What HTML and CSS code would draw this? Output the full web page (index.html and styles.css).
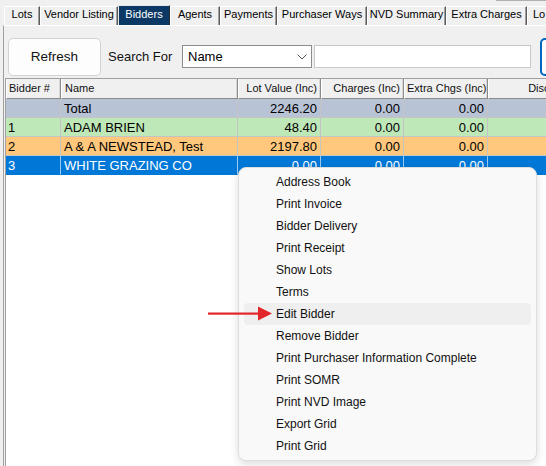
FILE: index.html
```html
<!DOCTYPE html>
<html>
<head>
<meta charset="utf-8">
<link rel="stylesheet" href="styles.css">
</head>
<body>
<div class="topline"></div>
<div class="tabs">
  <div class="tab w-lots">Lots</div>
  <div class="tab w-vendor">Vendor Listing</div>
  <div class="tab active w-bidders">Bidders</div>
  <div class="tab w-agents">Agents</div>
  <div class="tab w-payments">Payments</div>
  <div class="tab w-ways">Purchaser Ways</div>
  <div class="tab w-nvd">NVD Summary</div>
  <div class="tab w-extra">Extra Charges</div>
  <div class="tab w-lo">Lo</div>
</div>
<div class="panel">
  <div class="toolbar">
    <div class="btn-refresh">Refresh</div>
    <div class="search-label">Search For</div>
    <div class="combo"><span>Name</span>
      <svg class="chev" width="10" height="6" viewBox="0 0 10 6"><polyline points="0.5,0.5 5,5 9.5,0.5" fill="none" stroke="#555" stroke-width="1"/></svg>
    </div>
    <div class="textbox"></div>
    <div class="btn-blue"></div>
  </div>
  <div class="grid">
    <div class="row head">
      <div class="c">Bidder #</div>
      <div class="c">Name</div>
      <div class="c r">Lot Value (Inc)</div>
      <div class="c r">Charges (Inc)</div>
      <div class="c r">Extra Chgs (Inc)</div>
      <div class="c r">Discount (Inc)</div>
    </div>
    <div class="row data total">
      <div class="c"></div>
      <div class="c">Total</div>
      <div class="c r">2246.20</div>
      <div class="c r">0.00</div>
      <div class="c r">0.00</div>
      <div class="c r"></div>
    </div>
    <div class="row data green">
      <div class="c">1</div>
      <div class="c">ADAM BRIEN</div>
      <div class="c r">48.40</div>
      <div class="c r">0.00</div>
      <div class="c r">0.00</div>
      <div class="c r"></div>
    </div>
    <div class="row data orange">
      <div class="c">2</div>
      <div class="c">A &amp; A NEWSTEAD, Test</div>
      <div class="c r">2197.80</div>
      <div class="c r">0.00</div>
      <div class="c r">0.00</div>
      <div class="c r"></div>
    </div>
    <div class="row data selected">
      <div class="c">3</div>
      <div class="c">WHITE GRAZING CO</div>
      <div class="c r">0.00</div>
      <div class="c r">0.00</div>
      <div class="c r">0.00</div>
      <div class="c r"></div>
    </div>
  </div>
</div>

<div class="menu">
  <div class="item">Address Book</div>
  <div class="item">Print Invoice</div>
  <div class="item">Bidder Delivery</div>
  <div class="item">Print Receipt</div>
  <div class="item">Show Lots</div>
  <div class="item">Terms</div>
  <div class="item hover">Edit Bidder</div>
  <div class="item">Remove Bidder</div>
  <div class="item">Print Purchaser Information Complete</div>
  <div class="item">Print SOMR</div>
  <div class="item">Print NVD Image</div>
  <div class="item">Export Grid</div>
  <div class="item">Print Grid</div>
</div>

<svg class="arrow" width="70" height="18" viewBox="0 0 70 18">
  <rect x="3" y="7.5" width="52" height="2.2" fill="#e3262b"/>
  <polygon points="53,1.5 67,8.6 53,15.5" fill="#e3262b"/>
</svg>
</body>
</html>
```
FILE: styles.css
```css
html, body {
  margin: 0;
  padding: 0;
}
body {
  width: 546px;
  height: 466px;
  overflow: hidden;
  position: relative;
  background: #f0f0f0;
  font-family: "Liberation Sans", Arial, sans-serif;
  color: #000;
}
.topline {
  position: absolute;
  left: 496px;
  top: 0;
  width: 60px;
  height: 1px;
  background: #b0b0b0;
}
.tabs {
  display: flex;
  align-items: flex-end;
  height: 25px;
  padding-left: 4px;
  box-sizing: border-box;
  white-space: nowrap;
}
.tab {
  flex: none;
  box-sizing: border-box;
  height: 19px;
  border-left: 1px solid #fff;
  border-top: 1px solid #fff;
  border-right: 1px solid #5a5a5a;
  box-shadow: inset -1px 0 #a0a0a0;
  font-size: 11px;
  line-height: 15px;
  text-align: center;
  overflow: hidden;
}
.tab.active {
  height: 20px;
  background: #0c3866;
  color: #fff;
  border-color: #e8e8e8;
  border-right-color: #2a2a2a;
  line-height: 17px;
  box-shadow: none;
}
.w-lots { width: 36px; }
.w-vendor { width: 78px; }
.w-bidders { width: 52px; }
.w-agents { width: 50px; }
.w-payments { width: 57px; }
.w-ways { width: 90px; }
.w-nvd { width: 79px; }
.w-extra { width: 81px; }
.w-lo { width: 30px; text-align: left; padding-left: 5px; }

.panel {
  margin-left: 3px;
  border-left: 1px solid #a0a0a0;
  border-top: 1px solid #fff;
  height: 440px;
}
.toolbar {
  display: flex;
  align-items: flex-start;
  height: 52px;
  white-space: nowrap;
}
.btn-refresh {
  flex: none;
  margin-left: 4px;
  margin-top: 12px;
  width: 93px;
  height: 38px;
  box-sizing: border-box;
  background: #fdfdfd;
  border: 1px solid #d3d3d3;
  border-radius: 5px;
  font-size: 13.5px;
  line-height: 36px;
  text-align: center;
  color: #111;
}
.search-label {
  flex: none;
  margin-left: 7px;
  margin-top: 19px;
  width: 74px;
  height: 23px;
  font-size: 13px;
  line-height: 24px;
  color: #111;
}
.combo {
  flex: none;
  position: relative;
  margin-top: 19px;
  width: 130px;
  height: 23px;
  box-sizing: border-box;
  background: #fff;
  border: 1px solid #8c8c8c;
  font-size: 13px;
  line-height: 21px;
  padding-left: 5px;
}
.chev {
  position: absolute;
  right: 4px;
  top: 8px;
}
.textbox {
  flex: none;
  margin-left: 2px;
  margin-top: 19px;
  width: 217px;
  height: 23px;
  box-sizing: border-box;
  background: #fff;
  border: 1px solid #c8c8c8;
}
.btn-blue {
  flex: none;
  margin-left: 9px;
  margin-top: 12px;
  width: 40px;
  height: 38px;
  box-sizing: border-box;
  background: #fdfdfd;
  border: 2px solid #0067c0;
  border-radius: 5px;
}

.grid {
  margin-left: 1px;
  height: 388px;
  background: #fff;
  border-left: 1px solid #a0a0a0;
  white-space: nowrap;
}
.row {
  display: grid;
  grid-template-columns: 55px 177px 83px 83px 84px 112px;
  width: 594px;
}
.c {
  box-sizing: border-box;
  overflow: hidden;
  padding: 0 3px 0 2px;
}
.c.r {
  text-align: right;
}
.row.head {
  height: 21px;
  border-top: 1px solid #a0a0a0;
  box-sizing: border-box;
  background: #f0f0f0;
}
.row.head .c {
  font-size: 11px;
  line-height: 19px;
  border-left: 1px solid #fff;
  border-right: 1px solid #8a8a8a;
  border-bottom: 1px solid #8a8a8a;
  box-shadow: inset -1px 0 #d8d8d8;
  color: #111;
}
.row.head .c:nth-child(2) {
  padding-left: 3px;
}
.row.data {
  height: 19px;
}
.row.data .c {
  font-size: 13px;
  line-height: 19px;
  border-right: 1px solid #c4c4c4;
  border-bottom: 1px solid #c4c4c4;
}
.row.data .c:nth-child(2) {
  padding-left: 3px;
}
.total { background: #b8c3d6; }
.green { background: #bfe8b8; }
.orange { background: #ffc87c; }
.selected { background: #0078d7; color: #fff; }
.row.selected .c {
  border-right-color: #9cc9ee;
  border-bottom-color: #0078d7;
}

.arrow {
  position: absolute;
  left: 205px;
  top: 305px;
  z-index: 10;
}

.menu {
  position: absolute;
  left: 238px;
  top: 167px;
  width: 299px;
  box-sizing: border-box;
  padding: 3px 5px 3px;
  background: #f9f9f9;
  border: 1px solid #dedede;
  border-radius: 8px;
  box-shadow: 0 3px 8px rgba(0, 0, 0, 0.14);
  z-index: 5;
}
.item {
  height: 22px;
  line-height: 22px;
  padding-left: 32px;
  font-size: 12px;
  color: #111;
  border-radius: 4px;
  white-space: nowrap;
}
.item.hover {
  background: #efefef;
}
```
